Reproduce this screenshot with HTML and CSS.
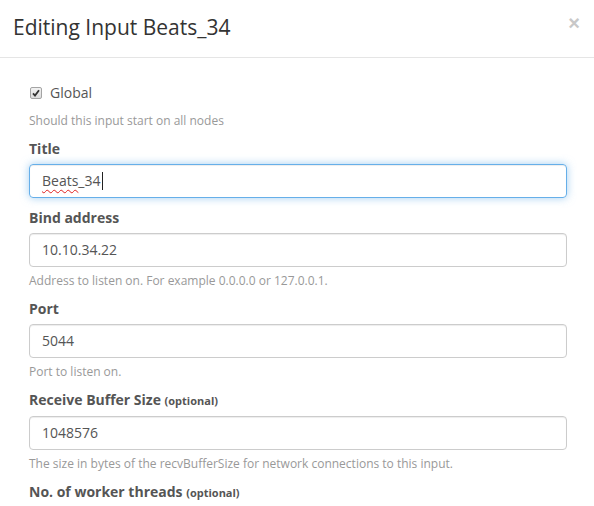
FILE: index.html
```html
<!DOCTYPE html>
<html lang="en">
<head>
<meta charset="utf-8">
<title>Editing Input Beats_34</title>
<link rel="stylesheet" href="styles.css">
</head>
<body>
<div class="modal">
  <div class="modal-header">
    <h4 class="modal-title">Editing Input Beats_34</h4>
    <span class="close">&times;</span>
  </div>
  <div class="modal-body">
    <div class="checkbox-row">
      <span class="checkbox"><svg width="8" height="8" viewBox="0 0 8 8"><path d="M1 4.3 L3 6.5 L7 1.2" fill="none" stroke="#333" stroke-width="1.8"/></svg></span>
      <span class="checkbox-label">Global</span>
    </div>
    <p class="help first">Should this input start on all nodes</p>

    <div class="form-group">
      <label class="label">Title</label>
      <div class="form-control focus"><span class="misspelled">Beats</span>_34<span class="caret"></span></div>
    </div>

    <div class="form-group">
      <label class="label">Bind address</label>
      <div class="form-control">10.10.34.22</div>
      <p class="help">Address to listen on. For example 0.0.0.0 or 127.0.0.1.</p>
    </div>

    <div class="form-group">
      <label class="label">Port</label>
      <div class="form-control">5044</div>
      <p class="help">Port to listen on.</p>
    </div>

    <div class="form-group">
      <label class="label">Receive Buffer Size <small class="opt">(optional)</small></label>
      <div class="form-control">1048576</div>
      <p class="help">The size in bytes of the recvBufferSize for network connections to this input.</p>
    </div>

    <div class="form-group">
      <label class="label">No. of worker threads <small class="opt">(optional)</small></label>
    </div>
  </div>
</div>
</body>
</html>
```

FILE: styles.css
```css
* { box-sizing: border-box; }
html, body {
  margin: 0;
  padding: 0;
  background: #fff;
}
body {
  font-family: "Open Sans", "DejaVu Sans", sans-serif;
  font-size: 14px;
  line-height: 20px;
  color: #555;
  overflow: hidden;
}
.modal {
  width: 594px;
  height: 506px;
  background: #fff;
}
.modal-header {
  display: flex;
  justify-content: space-between;
  align-items: flex-start;
  height: 58px;
  padding: 14px 14px 0 13px;
  border-bottom: 1px solid #e5e5e5;
}
.modal-title {
  margin: 0;
  font-size: 21px;
  line-height: 26px;
  font-weight: 400;
  color: #333;
}
.close {
  font-family: "Liberation Sans", "Open Sans", sans-serif;
  font-size: 20px;
  font-weight: 700;
  line-height: 1;
  color: #c8c8c8;
  margin-top: -1px;
}
.modal-body {
  padding: 25px 27px 0 29px;
}
.checkbox-row {
  display: flex;
  align-items: center;
  height: 20px;
  gap: 8px;
}
.checkbox {
  display: flex;
  align-items: center;
  justify-content: center;
  width: 12px;
  height: 12px;
  margin-left: 1px;
  border: 1px solid #a4a4a4;
  border-radius: 2px;
  background: linear-gradient(#f2f2f2, #dcdcdc);
}
.checkbox-label {
  color: #555;
}
.help {
  margin: 5px 0 0;
  font-size: 12px;
  line-height: 17px;
  color: #999;
}
.help.first {
  margin-top: 9px;
}
.form-group {
  margin-top: 10px;
}
.label {
  display: block;
  margin-bottom: 5px;
  font-weight: 700;
  color: #555;
}
.opt {
  font-size: 11px;
  font-weight: 700;
}
.form-control {
  height: 34px;
  padding: 6px 12px;
  border: 1px solid #ccc;
  border-radius: 4px;
  box-shadow: inset 0 1px 1px rgba(0, 0, 0, 0.075);
  color: #555;
  font-size: 14px;
  line-height: 20px;
}
.form-control.focus {
  border-color: #66afe9;
  box-shadow: inset 0 1px 1px rgba(0, 0, 0, 0.075), 0 0 8px rgba(102, 175, 233, 0.6);
}
.misspelled {
  text-decoration: underline wavy #e02020;
  text-decoration-thickness: 1px;
  text-underline-offset: 3px;
}
.caret {
  display: inline-block;
  width: 1px;
  height: 18px;
  margin-left: 1px;
  background: #222;
  vertical-align: -4px;
}
```
